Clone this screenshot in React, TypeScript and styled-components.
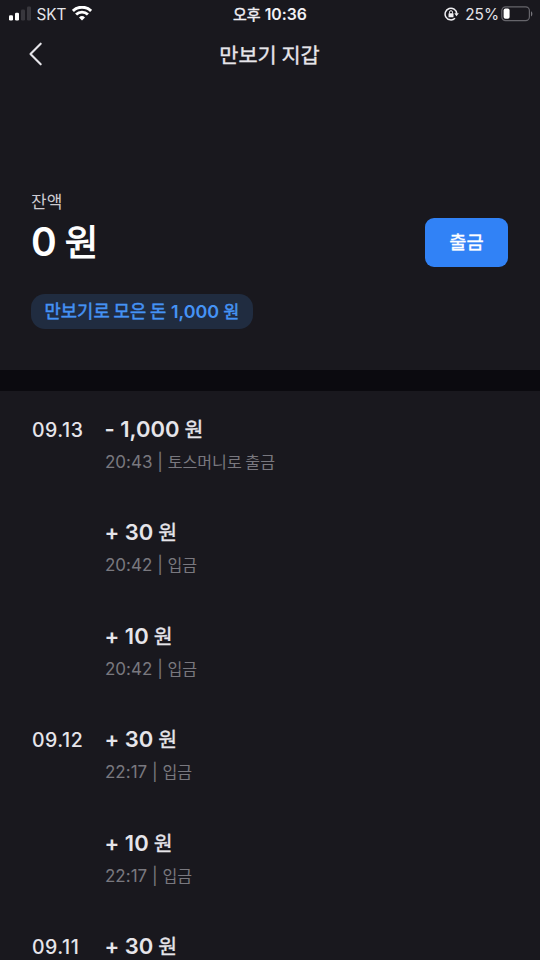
import React from "react";
import styled, { createGlobalStyle } from "styled-components";

const GlobalStyle = createGlobalStyle`
  * { box-sizing: border-box; }
  body {
    margin: 0;
    background: #19181e;
    font-family: Inter, "Noto Sans CJK KR", sans-serif;
    color: #e6e5ea;
    overflow: hidden;
  }
`;

const Screen = styled.main`
  width: 540px;
  height: 960px;
  overflow: hidden;
  background: #19181e;
  display: flex;
  flex-direction: column;
`;

const StatusBar = styled.header`
  flex: none;
  height: 28px;
  display: grid;
  grid-template-columns: 1fr auto 1fr;
  align-items: center;
  font-size: 16px;
  line-height: 28px;
  white-space: nowrap;
`;

const StatusLeft = styled.div`
  display: flex;
  align-items: center;
  padding-left: 9px;
  svg { flex: none; margin-bottom: 2px; }
`;

const Carrier = styled.span`
  margin: 0 6px 0 4.5px;
  padding-top: 1px;
  font-size: 15.3px;
`;

const Clock = styled.div`
  padding-top: 1px;
  font-weight: 600;
  font-size: 15.8px;
  color: #f2f1f5;
`;

const StatusRight = styled.div`
  display: flex;
  align-items: center;
  justify-content: flex-end;
  padding-right: 7px;
  svg { flex: none; margin-bottom: 2px; }
`;

const BatteryPercent = styled.span`
  margin: 0 2px 0 6px;
  padding-top: 1px;
  font-size: 15.4px;
`;

const NavBar = styled.nav`
  flex: none;
  height: 52px;
  display: grid;
  grid-template-columns: 72px 1fr 72px;
  align-items: center;
`;

const BackButton = styled.button`
  border: 0;
  background: none;
  padding: 0 0 1px 28px;
  height: 52px;
  display: flex;
  align-items: center;
`;

const Title = styled.h1`
  margin: 0;
  padding: 3px 1px 0 0;
  text-align: center;
  font-size: 20.8px;
  line-height: 30px;
  font-weight: 500;
`;

const Ko = styled.span<{ $size?: number; $stroke?: number; $gap?: number }>`
  font-family: "Noto Sans CJK KR", sans-serif;
  font-weight: 400;
  font-size: ${(p) => (p.$size ? `${p.$size}px` : "inherit")};
  margin-left: ${(p) => p.$gap ?? 0}px;
  line-height: 1;
  -webkit-text-stroke: ${(p) => p.$stroke ?? 0}px currentColor;
`;

const Summary = styled.section`
  flex: none;
  height: 290px;
  padding: 109px 32px 0 31px;
`;

const BalanceLabel = styled.div`
  height: 26px;
  line-height: 26px;
  font-size: 17px;
  color: #cccbd1;
`;

const BalanceRow = styled.div`
  height: 54px;
  display: flex;
  justify-content: space-between;
  align-items: center;
`;

const Balance = styled.div`
  font-size: 39px;
  line-height: 54px;
  font-weight: 600;
  color: #fff;
`;

const WithdrawButton = styled.button`
  width: 83px;
  height: 49px;
  margin-top: 1px;
  border: 0;
  border-radius: 9px;
  background: #3182f6;
  color: #fff;
  padding: 5px 0 0;
  line-height: 44px;
`;

const EarnedPill = styled.div`
  width: 222px;
  height: 35px;
  margin-top: 25px;
  border-radius: 14px;
  background: #202c40;
  color: #4593f5;
  font-size: 17.9px;
  font-weight: 600;
  line-height: 35px;
  text-align: center;
  white-space: nowrap;
`;

const Divider = styled.div`
  flex: none;
  height: 21px;
  background: #0b0a0f;
`;

const History = styled.ul`
  list-style: none;
  margin: 0;
  padding: 22px 32px 0;
`;

const Entry = styled.li`
  height: 103.4px;
  display: grid;
  grid-template-columns: 73px 1fr;
`;

const EntryDate = styled.div`
  font-size: 19.5px;
  font-weight: 500;
  line-height: 34px;
  letter-spacing: 0.5px;
`;

const Amount = styled.div`
  height: 33px;
  margin-left: -0.5px;
  line-height: 32px;
  font-size: 22px;
  font-weight: 600;
`;

const Detail = styled.div`
  height: 32px;
  line-height: 32px;
  font-size: 17px;
  color: #79787f;
`;

interface Transaction {
  date?: string;
  amount: string;
  time: string;
  kind: string;
}

const transactions: Transaction[] = [
  { date: "09.13", amount: "- 1,000", time: "20:43", kind: "토스머니로 출금" },
  { amount: "+ 30", time: "20:42", kind: "입금" },
  { amount: "+ 10", time: "20:42", kind: "입금" },
  { date: "09.12", amount: "+ 30", time: "22:17", kind: "입금" },
  { amount: "+ 10", time: "22:17", kind: "입금" },
  { date: "09.11", amount: "+ 30", time: "", kind: "" },
];

const SignalIcon = () => (
  <svg width="23" height="16" viewBox="0 0 23 16">
    <rect x="0" y="9.3" width="4" height="5.2" rx="1.2" fill="#fff" />
    <rect x="6" y="6.8" width="4" height="7.7" rx="1.2" fill="#fff" />
    <rect x="12" y="3.5" width="4" height="11" rx="1.2" fill="#38373d" />
    <rect x="18" y="0.5" width="4" height="14" rx="1.2" fill="#38373d" />
  </svg>
);

const WifiIcon = () => (
  <svg width="20" height="15" viewBox="0 0 20 15" fill="none" stroke="#fff" strokeWidth="2.9">
    <path d="M.9 4.9a13 13 0 0 1 18.2 0" />
    <path d="M4.1 8.5a8.4 8.4 0 0 1 11.8 0" />
    <path d="M10 14.5 7 11.5a4.3 4.3 0 0 1 6 0Z" fill="#fff" stroke="none" />
  </svg>
);

const RotationLockIcon = () => (
  <svg width="15" height="14" viewBox="0 0 15 14" fill="none">
    <path d="M11 11.2A5.8 5.8 0 1 1 12.7 6.6" stroke="#f0eff3" strokeWidth="1.5" />
    <path d="M10.3 6.2h4.5l-2.3 3Z" fill="#f0eff3" />
    <rect x="4.5" y="6.2" width="5" height="4" rx=".5" fill="#f0eff3" />
    <path d="M5.5 6.5V5.2a1.5 1.5 0 0 1 3 0v1.3" stroke="#f0eff3" strokeWidth="1" />
  </svg>
);

const BatteryIcon = () => (
  <svg width="32" height="16" viewBox="0 0 32 16" fill="none">
    <rect x=".8" y=".8" width="27.6" height="13.8" rx="3.8" stroke="#66656b" strokeWidth="1.2" />
    <rect x="2.6" y="2.6" width="6" height="10.2" rx="1.8" fill="#fff" />
    <path d="M30 5.2c1.8.8 1.8 4.4 0 5.2Z" fill="#77767c" />
  </svg>
);

const BackIcon = () => (
  <svg width="16" height="24" viewBox="0 0 16 24" fill="none">
    <path
      d="M12.7 1.7 2.5 12l10.2 10.3"
      stroke="#e6e5ea"
      strokeWidth="2.1"
      strokeLinecap="round"
      strokeLinejoin="round"
    />
  </svg>
);

export default function App() {
  return (
    <Screen>
      <GlobalStyle />
      <StatusBar>
        <StatusLeft>
          <SignalIcon />
          <Carrier>SKT</Carrier>
          <WifiIcon />
        </StatusLeft>
        <Clock>
          <Ko $size={15} $stroke={0.4}>오후</Ko> 10:36
        </Clock>
        <StatusRight>
          <RotationLockIcon />
          <BatteryPercent>25%</BatteryPercent>
          <BatteryIcon />
        </StatusRight>
      </StatusBar>
      <NavBar>
        <BackButton aria-label="뒤로">
          <BackIcon />
        </BackButton>
        <Title>
          <Ko $stroke={0.35}>만보기 지갑</Ko>
        </Title>
      </NavBar>
      <Summary>
        <BalanceLabel>
          <Ko>잔액</Ko>
        </BalanceLabel>
        <BalanceRow>
          <Balance>
            0<Ko $size={36.5} $stroke={1} $gap={8}>원</Ko>
          </Balance>
          <WithdrawButton>
            <Ko $size={18.7} $stroke={0.35}>출금</Ko>
          </WithdrawButton>
        </BalanceRow>
        <EarnedPill>
          <Ko $size={17.7} $stroke={0.5}>만보기로 모은 돈</Ko> 1,000 <Ko $size={17.2} $stroke={0.5}>원</Ko>
        </EarnedPill>
      </Summary>
      <Divider />
      <History>
        {transactions.map((t, i) => (
          <Entry key={i}>
            <EntryDate>{t.date}</EntryDate>
            <div>
              <Amount>
                {t.amount}
                <Ko $size={20.5} $stroke={0.35} $gap={5}>원</Ko>
              </Amount>
              {t.time && (
                <Detail>
                  {t.time} | <Ko $size={16.1}>{t.kind}</Ko>
                </Detail>
              )}
            </div>
          </Entry>
        ))}
      </History>
    </Screen>
  );
}
